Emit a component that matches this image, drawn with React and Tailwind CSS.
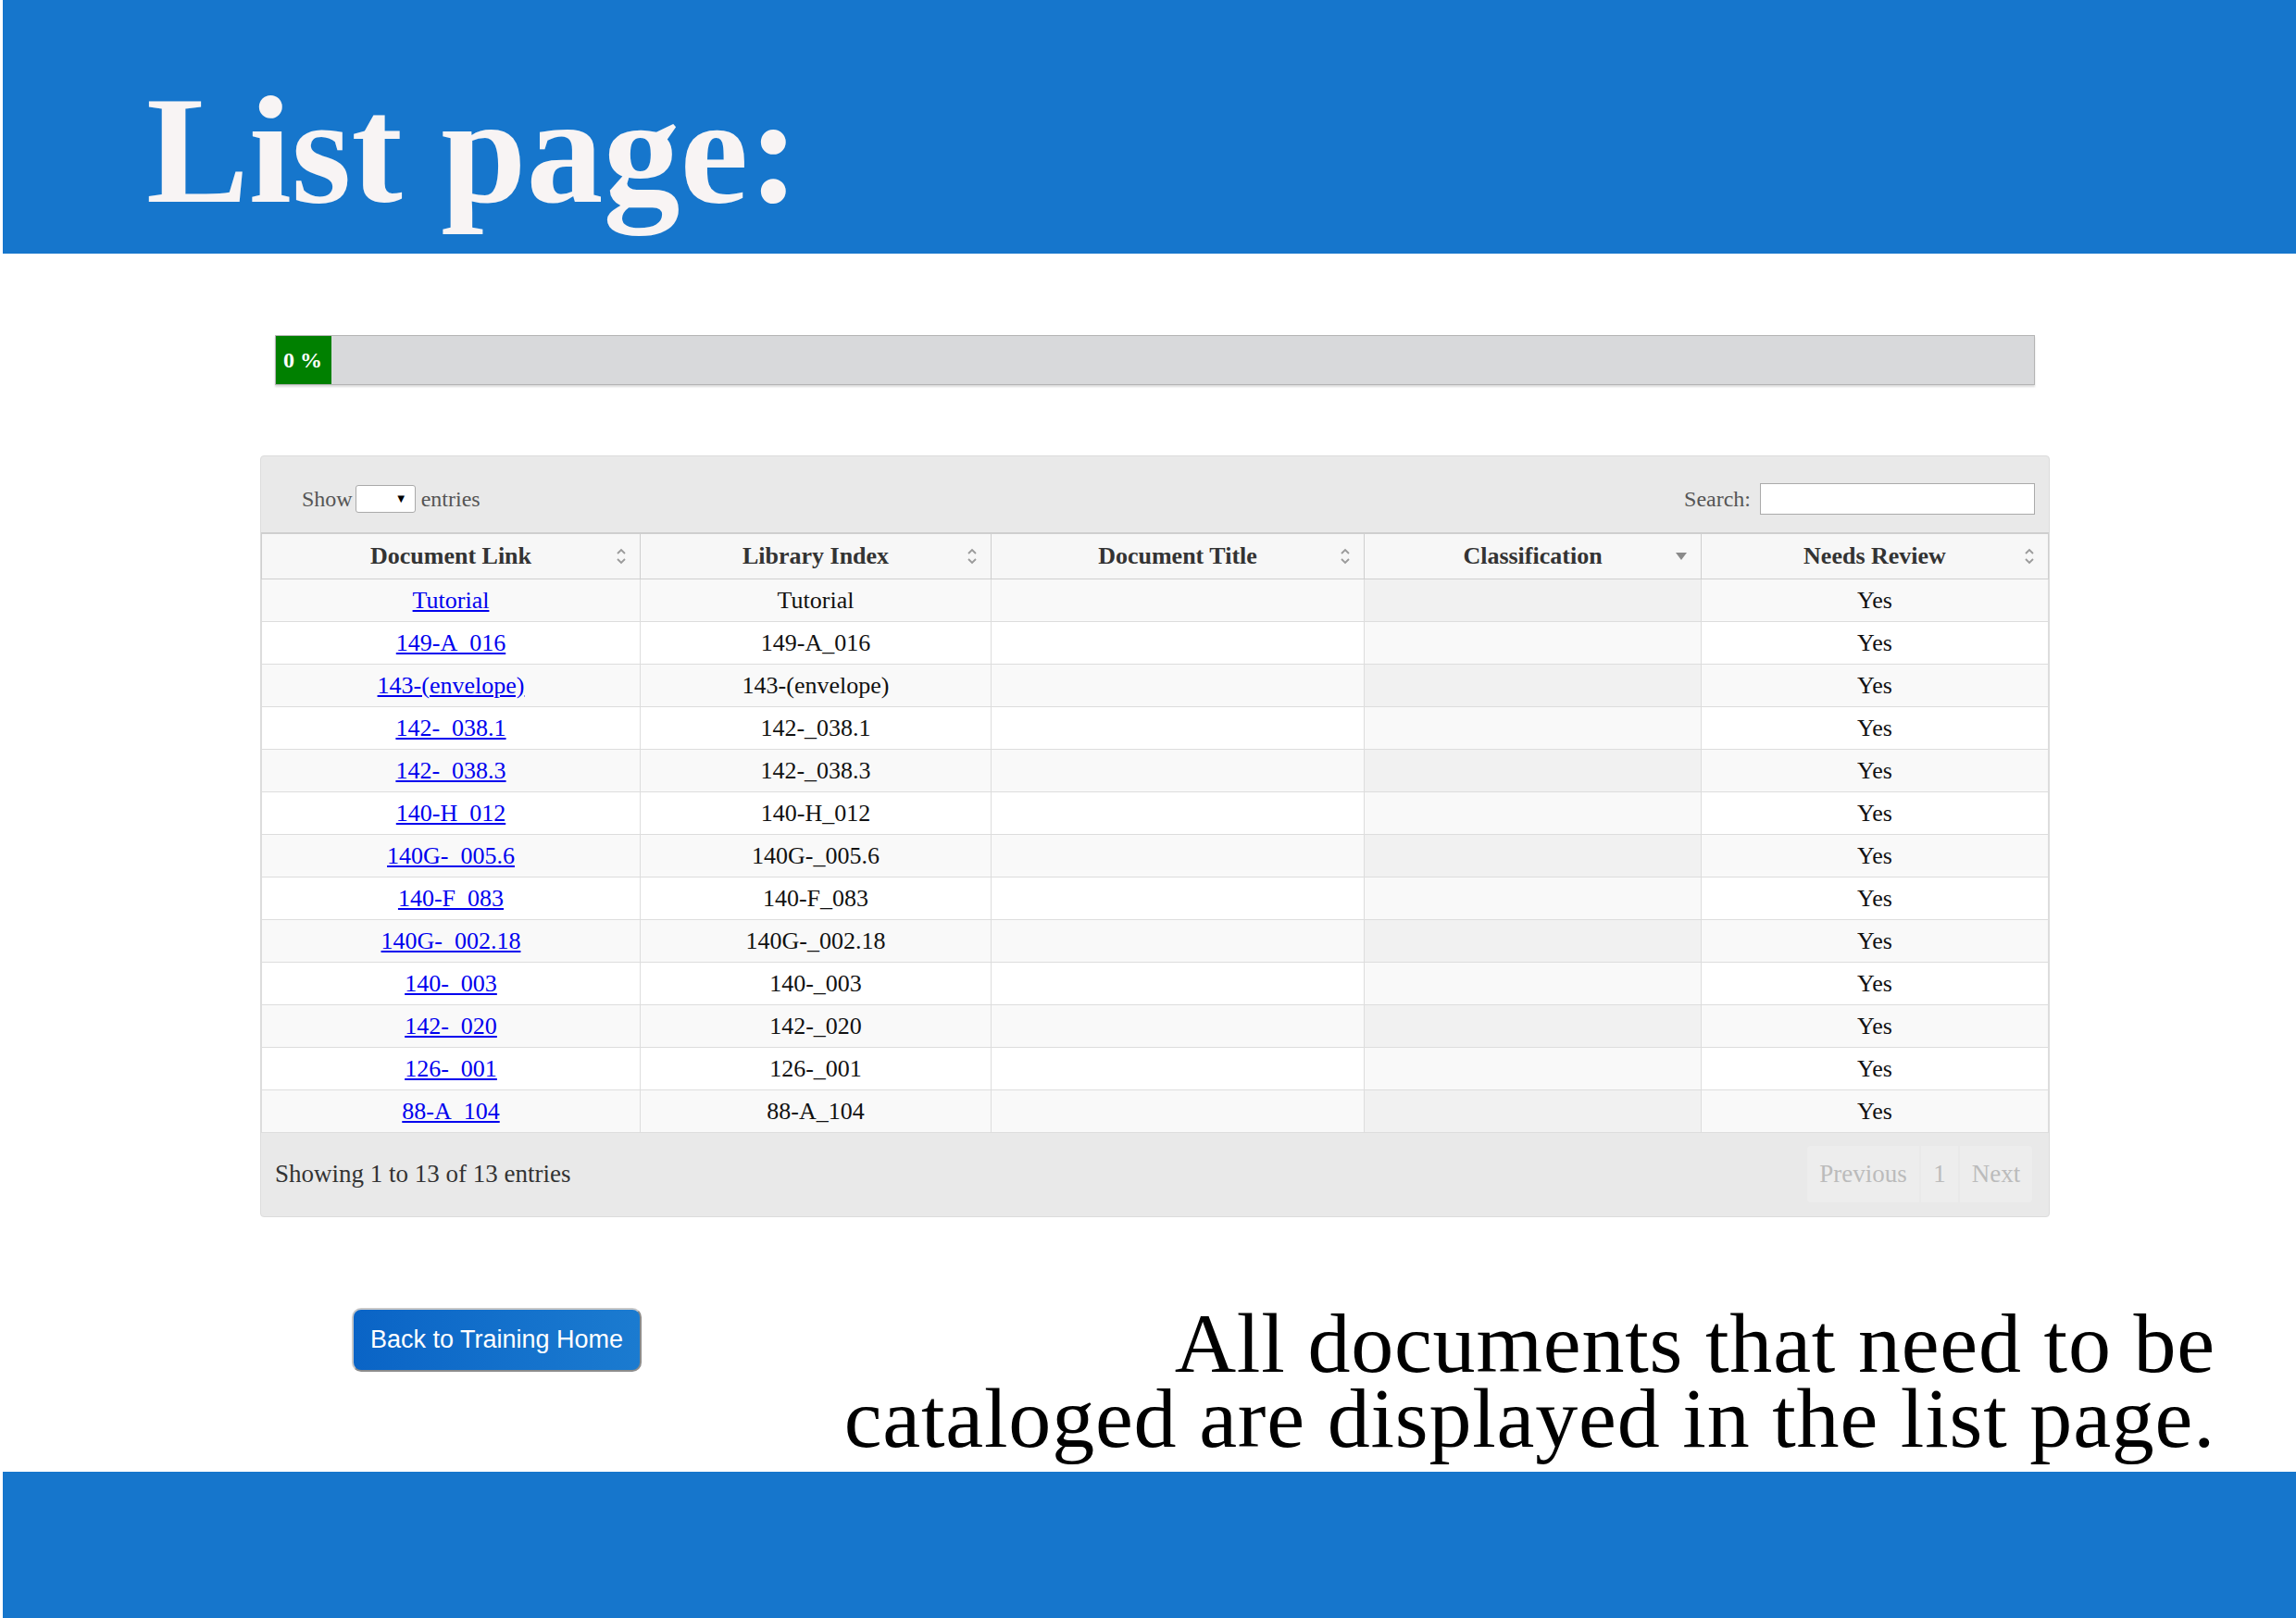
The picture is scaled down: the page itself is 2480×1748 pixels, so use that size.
import React from 'react';

const documents = [
  'Tutorial',
  '149-A_016',
  '143-(envelope)',
  '142-_038.1',
  '142-_038.3',
  '140-H_012',
  '140G-_005.6',
  '140-F_083',
  '140G-_002.18',
  '140-_003',
  '142-_020',
  '126-_001',
  '88-A_104',
];

const columns = [
  { label: 'Document Link', width: 'w-[409px]', sort: 'both' },
  { label: 'Library Index', width: 'w-[379px]', sort: 'both' },
  { label: 'Document Title', width: 'w-[403px]', sort: 'both' },
  { label: 'Classification', width: 'w-[364px]', sort: 'desc' },
  { label: 'Needs Review', width: 'w-[375px]', sort: 'both' },
];

const SortBoth = () => (
  <svg width="12" height="20" viewBox="0 0 12 20" fill="none" stroke="#9a9a9a" strokeWidth="1.8">
    <path d="M2 7 L6 3 L10 7" />
    <path d="M2 13 L6 17 L10 13" />
  </svg>
);

const SortDesc = () => (
  <svg width="14" height="10" viewBox="0 0 14 10" fill="#8a8a8a">
    <path d="M1 1 L13 1 L7 9 Z" />
  </svg>
);

const App = () => {
  return (
    <div className="w-[2480px] h-[1748px] bg-white flex flex-col overflow-hidden font-['Liberation_Serif','Times_New_Roman',serif]">
      {/* Title bar */}
      <div className="ml-[3px] h-[274px] bg-[#1676cc] pl-[155px] pt-[82px]">
        <h1 className="text-[166px] leading-[160px] font-bold text-[#f8f4f4]">List page:</h1>
      </div>

      {/* Progress */}
      <div className="ml-[297px] mt-[88px] w-[1901px] h-[54px] bg-[#d8d9db] border border-[#b4b4b4] shadow-[0_2px_2px_rgba(0,0,0,0.15)] flex">
        <div className="w-[60px] h-full bg-[#008000] flex items-center pl-[8px]">
          <span className="text-white font-bold text-[24px]">0 %</span>
        </div>
      </div>

      {/* Data table */}
      <div className="ml-[281px] mt-[76px] w-[1933px] bg-[#e9e9e9] border border-[#dcdcdc] rounded-[4px]">
        <div className="h-[82px] pt-[10px] flex items-center justify-between pl-[44px] pr-[15px]">
          <div className="flex items-center text-[24px] text-[#555]">
            <span>Show</span>
            <div className="ml-[3px] mr-[6px] w-[65px] h-[30px] bg-white border border-[#aaa] rounded-[3px] flex items-center justify-end pr-[8px]">
              <span className="text-[13px] text-black">▼</span>
            </div>
            <span>entries</span>
          </div>
          <div className="flex items-center text-[24px] text-[#555]">
            <span className="mr-[10px]">Search:</span>
            <div className="w-[297px] h-[34px] bg-white border border-[#aaa]" />
          </div>
        </div>

        <table className="w-[1930px] table-fixed border-collapse text-[26px]">
          <thead>
            <tr className="h-[49px] bg-[#f7f7f7] border-t-2 border-[#cfcfcf]">
              {columns.map((col) => (
                <th key={col.label} className={`${col.width} relative border border-[#cfcfcf] font-bold text-[#333] text-center`}>
                  {col.label}
                  <span className="absolute right-[14px] top-1/2 -translate-y-1/2 flex">
                    {col.sort === 'desc' ? <SortDesc /> : <SortBoth />}
                  </span>
                </th>
              ))}
            </tr>
          </thead>
          <tbody>
            {documents.map((doc, i) => {
              const odd = i % 2 === 0;
              return (
                <tr key={doc} className={`h-[46px] ${odd ? 'bg-[#f9f9f9]' : 'bg-white'}`}>
                  <td className="border border-[#dddddd] text-center">
                    <a href="#" className="text-[#0000ee] underline underline-offset-2">{doc}</a>
                  </td>
                  <td className="border border-[#dddddd] text-center text-[#111]">{doc}</td>
                  <td className="border border-[#dddddd]"></td>
                  <td className={`border border-[#dddddd] ${odd ? 'bg-[#f1f1f1]' : 'bg-[#f9f9f9]'}`}></td>
                  <td className="border border-[#dddddd] text-center text-[#111]">Yes</td>
                </tr>
              );
            })}
          </tbody>
        </table>

        <div className="h-[90px] flex items-center justify-between pl-[15px] pr-[18px]">
          <span className="text-[27px] text-[#333]">Showing 1 to 13 of 13 entries</span>
          <div className="flex h-[61px] rounded-[4px] overflow-hidden text-[27px] text-[#bbbbbb] gap-[2px]">
            <span className="w-[121px] bg-[#ededed] flex items-center justify-center">Previous</span>
            <span className="w-[40px] bg-[#ededed] flex items-center justify-center">1</span>
            <span className="w-[78px] bg-[#ededed] flex items-center justify-center">Next</span>
          </div>
        </div>
      </div>

      {/* Button and caption */}
      <div className="mt-[98px] flex items-start justify-between pr-[87px]">
        <button className="ml-[380px] w-[313px] h-[69px] rounded-[10px] border-2 border-[#c8c8c8] border-r-[#8c8c8c] border-b-[#8c8c8c] bg-gradient-to-r from-[#0a64c6] to-[#1b7bd0] text-white text-[27px] font-['Liberation_Sans',Arial,sans-serif]">
          Back to Training Home
        </button>
        <p className="-mt-[2px] text-right text-[92px] leading-[81px] tracking-[0.8px] text-black">
          All documents that need to be
          <br />
          cataloged are displayed in the list page.
        </p>
      </div>

      {/* Bottom bar */}
      <div className="mt-auto ml-[3px] h-[158px] bg-[#1676cc]" />
    </div>
  );
};

export default App;
